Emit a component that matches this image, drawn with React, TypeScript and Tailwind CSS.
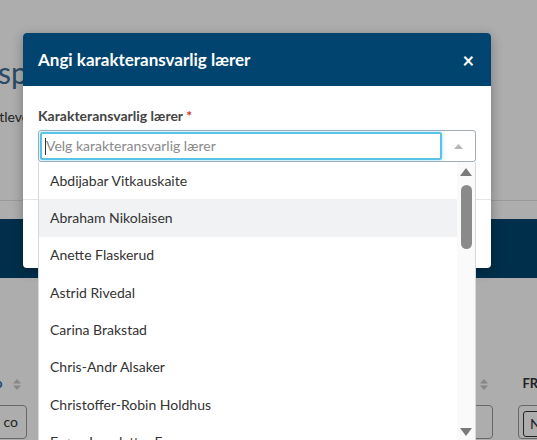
const teachers = [
  'Abdijabar Vitkauskaite',
  'Abraham Nikolaisen',
  'Anette Flaskerud',
  'Astrid Rivedal',
  'Carina Brakstad',
  'Chris-Andr Alsaker',
  'Christoffer-Robin Holdhus',
  'Frøya Jonsdatter Fossum',
];

function SortIcon({ className = '' }: { className?: string }) {
  return (
    <svg width="8" height="11" viewBox="0 0 8 11" className={`shrink-0 ${className}`}>
      <path d="M4 0 L8 4.5 L0 4.5 Z" fill="#c8c8c8" />
      <path d="M4 11 L8 6.5 L0 6.5 Z" fill="#c8c8c8" />
    </svg>
  );
}

export default function App() {
  const active = 1;

  return (
    <div className="relative h-[440px] w-[537px] overflow-hidden bg-white font-['Lato',sans-serif]">
      {/* page behind the dialog */}
      <div className="flex flex-col">
        <h1 className="mt-[54px] -ml-[2px] whitespace-nowrap text-[30px] leading-[36px] text-[#3e6d96]">
          spesialundervisning
        </h1>
        <p className="mt-[17px] -ml-[11px] whitespace-nowrap text-sm leading-5 text-[#333]">
          Utlevering av elever
        </p>
        <div className="mt-[73px] h-px w-full bg-[#e2e2e2]" />
        <div className="mt-[18px] h-[59px] w-full bg-[#00466f]" />
        <div className="mt-[96px] flex h-[20px] w-[620px] items-center whitespace-nowrap text-[13px] font-bold">
          <span className="-ml-[5px] shrink-0 text-[#2b6aa3]">o</span>
          <SortIcon className="ml-[11px]" />
          <div className="w-[459px] shrink-0" />
          <SortIcon />
          <span className="ml-[34px] shrink-0 text-[#333]">FRI</span>
        </div>
        <div className="mt-[11px] flex w-[620px] whitespace-nowrap text-sm text-[#333]">
          <div className="-ml-[30px] flex h-[34px] w-[57px] shrink-0 items-center justify-end rounded-[4px] border border-[#9a9a9a] pr-[8px]">
            co
          </div>
          <div className="ml-[413px] h-[34px] w-[53px] shrink-0 rounded-[4px] border border-[#9a9a9a]" />
          <div className="ml-[25px] h-[34px] w-[60px] shrink-0 rounded-[4px] border border-[#9a9a9a] pl-[4px] pt-[5px]">
            <div className="flex h-[26px] items-center rounded-[3px] border border-[#333] pl-[6px]">N</div>
          </div>
        </div>
      </div>

      {/* overlay */}
      <div className="absolute inset-0 bg-black/[0.32]" />

      {/* dialog */}
      <div className="absolute left-[23px] top-[33px] w-[468px] rounded-[4px] bg-white shadow-[0_3px_12px_rgba(0,0,0,0.3)]">
        <div className="flex h-[53px] items-center justify-between rounded-t-[4px] bg-[#00446f] pl-[15px] pr-[17px] text-white">
          <h2 className="text-[17px] font-bold">Angi karakteransvarlig lærer</h2>
          <span className="text-[20px] font-bold leading-none">×</span>
        </div>

        <div className="px-[15px] pb-[37px] pt-[20px]">
          <label className="block text-sm font-bold leading-5 text-[#444]">
            Karakteransvarlig lærer <span className="text-[#c0392b]">*</span>
          </label>
          <div className="relative mt-[4px]">
            <div className="flex h-[32px] items-center rounded-[3px] border border-[#a3abb3] bg-white">
              <div className="ml-px flex h-[28px] w-[402px] items-center rounded-[2px] border-2 border-[#5bc3e8] pl-[3px] shadow-[0_0_4px_rgba(91,195,232,0.6)]">
                <span className="h-[17px] w-px bg-[#333]" />
                <span className="text-sm text-[#8a8a8a]">Velg karakteransvarlig lærer</span>
              </div>
              <div className="flex flex-1 justify-center">
                <svg width="9" height="5" viewBox="0 0 9 5">
                  <path d="M4.5 0 L9 5 L0 5 Z" fill="#b5b5b5" />
                </svg>
              </div>
            </div>

            {/* dropdown */}
            <div className="absolute left-0 top-full z-10 flex h-[280px] w-full border-x border-[#d5d8dc] bg-white">
              <ul className="flex-1 overflow-hidden">
                {teachers.map((t, i) => (
                  <li
                    key={t}
                    className={`flex h-[37.33px] items-center pl-[11px] text-sm text-[#333] ${
                      i === active ? 'bg-[#f1f2f4]' : ''
                    }`}
                  >
                    {t}
                  </li>
                ))}
              </ul>
              <div className="flex w-[18px] flex-col items-center bg-[#fafafa] pt-[6px]">
                <svg width="12" height="8" viewBox="0 0 12 8">
                  <path d="M6 0 L12 8 L0 8 Z" fill="#7a7a7a" />
                </svg>
                <div className="mt-[9px] h-[64px] w-[11px] rounded-full bg-[#8a8a8a]" />
                <div className="flex-1" />
                <svg width="12" height="8" viewBox="0 0 12 8" className="mb-[6px]">
                  <path d="M6 8 L12 0 L0 0 Z" fill="#7a7a7a" />
                </svg>
              </div>
            </div>
          </div>
        </div>

        <div className="h-[69px] border-t border-[#e5e5e5]" />
      </div>
    </div>
  );
}
